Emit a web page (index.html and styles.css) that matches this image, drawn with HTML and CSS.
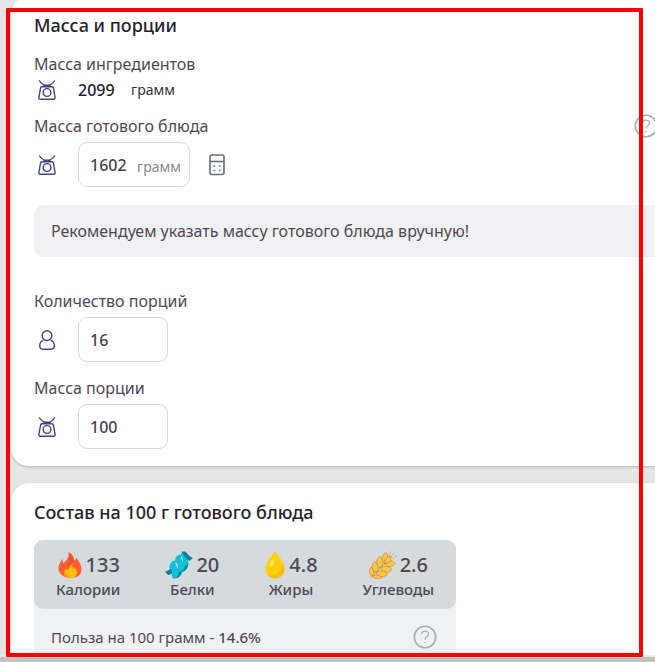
FILE: index.html
```html
<!DOCTYPE html>
<html lang="ru">
<head>
  <meta charset="UTF-8" />
  <meta name="viewport" content="width=device-width, initial-scale=1.0"/>
  <title>Масса и порции</title>
  <link rel="stylesheet" href="styles.css">
</head>
<body>

  <!-- shared icons -->
  <svg class="sprite" aria-hidden="true">
    <symbol id="scale" viewBox="0 0 18 20">
      <path d="M1.200 .5C3 3.500 5.500 5.300 9 5.300s6-1.800 7.800-4.800M4.200 6.700H13.800q1.300 0 1.600 1.300l1.700 9.500q.2 1.800-1.600 1.800H2.500q-1.800 0-1.600-1.800l1.700-9.500q.3-1.300 1.600-1.300zM6 4.800v1.900M12 4.800v1.900"/>
      <circle cx="9" cy="12.500" r="3.900"/>
    </symbol>
    <symbol id="person" viewBox="0 0 18 20">
      <circle cx="9" cy="5.600" r="4.900"/>
      <path d="M5.300 10.400C2.800 11.200 1.700 13 1.700 15.800c0 2.400 1 3.400 3.300 3.400h8c2.300 0 3.300-1 3.300-3.400 0-2.800-1.100-4.600-3.600-5.400"/>
    </symbol>
    <symbol id="help" viewBox="0 0 24 24">
      <circle cx="12" cy="12" r="10.700"/>
      <path d="M8.600 9.300c0-2 1.400-3.200 3.400-3.200s3.500 1.200 3.500 3c0 2.600-3.500 2.700-3.500 5.600M12 17v1.300" stroke-width="1.300"/>
    </symbol>
  </svg>

  <main>
    <section class="card">
      <h2>Масса и порции</h2>

      <div class="label">Масса ингредиентов</div>
      <div class="row total">
        <svg class="icon"><use href="#scale"/></svg>
        <span class="value">2099</span>
        <span>грамм</span>
      </div>

      <div class="label-row">
        <label class="label" for="mass">Масса готового блюда</label>
        <button class="help" type="button" aria-label="Справка"><svg><use href="#help"/></svg></button>
      </div>
      <div class="row">
        <svg class="icon"><use href="#scale"/></svg>
        <div class="field wide">
          <input id="mass" type="text" inputmode="numeric" value="1602">
          <span class="unit">грамм</span>
        </div>
        <button class="calc" type="button" aria-label="Калькулятор">
          <svg viewBox="0 0 16 22">
            <rect x="1" y="1" width="14" height="19.500" rx="2"/>
            <path d="M1 7.500h14"/>
            <path class="keys" d="M4.500 12h1.700M9.800 12h1.700M4.500 16.500h1.700M9.800 16.500h1.700"/>
          </svg>
        </button>
      </div>

      <p class="note">Рекомендуем указать массу готового блюда вручную!</p>

      <label class="label" for="portions">Количество порций</label>
      <div class="row">
        <svg class="icon"><use href="#person"/></svg>
        <div class="field"><input id="portions" type="text" inputmode="numeric" value="16"></div>
      </div>

      <label class="label next" for="portionMass">Масса порции</label>
      <div class="row">
        <svg class="icon"><use href="#scale"/></svg>
        <div class="field"><input id="portionMass" type="text" inputmode="numeric" value="100"></div>
      </div>
    </section>

    <section class="card">
      <h2>Состав на 100 г готового блюда</h2>
      <div class="nutrition">
        <div class="facts">
          <div class="fact">
            <div class="amount">
              <svg viewBox="0 0 26 28">
                <path fill="#ff5b35" d="M11.500 1C15 2.500 17 6 17.200 10c1.300-1 1.700-2.200 1.600-3.500C22 9.500 24.500 14 24.500 18c0 6-4.500 9-11 9S1.500 23 1.500 17.500C1.500 13.500 3.500 11 5 8c.8 1.700 1 3 1.200 4.500C10 9.500 12.500 5.500 11.500 1z"/>
                <path fill="#e63b25" d="M11.500 1C15 2.500 17 6 17.200 10c-1.200 3-3.500 4-6.200 5 2.500-4.500 3-9.500.5-14z" opacity=".35"/>
                <path fill="#ffc107" d="M13.500 13c2 2 2.200 3.500 2 5 1-.3 1.500-1 1.700-2 2.300 2.500 3.300 5 2.300 7.500-1 2.400-3.300 3.500-6 3.500-4 0-6.300-2-6.300-5 0-2 .8-3.300 1.800-4.800.4 1 .7 1.700 1.300 2.300 2-1.800 3.400-3.700 3.200-6.500z"/>
                <path fill="#ffa000" d="M8 18c.3 4 2 7 6 9-4.500 0-6.800-2-6.800-5 0-1.500.3-2.800.8-4z"/>
              </svg>
              <b>133</b>
            </div>
            <div>Калории</div>
          </div>
          <div class="fact">
            <div class="amount">
              <svg viewBox="0 0 28 28" class="wide-icon">
                <!-- dark turns behind the light strands -->
                <g fill="#0b8596">
                  <path d="M0 20.500c3 0 5-2.500 7-5l3 5c-2 2-4 3-7 3.500z"/>
                  <path d="M9 27.500c4.500 0 8-3.500 8.500-8.500l-4-3-3 7z"/>
                  <path d="M15.500 21c4.500 0 7.500-3.500 8-8.500l-4-3-3 7z"/>
                </g>
                <g fill="#13c0dc">
                  <path d="M4.500 17C4.500 12 7 9.500 10.500 9.500c-1 6 5 9 3 14-1 2.500-3 4-5.500 4-2.500-3.500 1-8-3.500-10.500z"/>
                  <path d="M10 10.500C10 5.500 12.500 3.500 16 3.500c-1 6 5 9 3.500 13.500-1 2.500-3 4-5.500 4-2.500-3.500.5-8-4-10.500z"/>
                  <path d="M15.500 4.500C16 2 17 .8 19 .5c3 4 4.500 7 4.500 11-.8 2.500-2 3.500-4.500 3.500-2-3.500.5-7.500-3.500-10.500z"/>
                </g>
                <path fill="#0b8596" d="M16.500.500h4c2 2.500 4 5 7.500 6.500l-3.500 3c-3.500-2-5.500-5.500-8-9.500z"/>
              </svg>
              <b>20</b>
            </div>
            <div>Белки</div>
          </div>
          <div class="fact">
            <div class="amount">
              <svg viewBox="0 0 22 28" class="drop">
                <path fill="#fdd00b" d="M11 .8c4 4.700 9.500 11 9.500 17.200 0 5.400-4 9.200-9.500 9.200S1.500 23.400 1.500 18C1.500 11.800 7 5.500 11 .8z"/>
                <path fill="#f6bd12" d="M18.200 11.500c1.400 2.300 2.300 4.400 2.300 6.500 0 5.400-4 9.200-9.500 9.200-3.500 0-6-1.300-7.700-3.500 8 2.500 14.500-2.200 14.900-12.200z"/>
                <ellipse fill="#ffe45a" cx="8" cy="12" rx="2" ry="4" transform="rotate(25 8 12)"/>
              </svg>
              <b>4.8</b>
            </div>
            <div>Жиры</div>
          </div>
          <div class="fact">
            <div class="amount">
              <svg viewBox="0 0 28 28" class="wide-icon">
                <g fill="#ffc44a" stroke="#c98a1e" stroke-width=".7">
                  <path d="M14.500 11.500C11.500 7.500 13 4 17 1.500c3 4 2.500 8-1 11z"/>
                  <path d="M16.500 13.500c3 3.500 6.500 2.500 9.500-1-3.500-4-6.500-4-10-1z"/>
                  <path d="M9.500 16C6.500 11.500 7.500 8 10.500 5.500c4 3 4.500 7.500 1.500 11z"/>
                  <path d="M12.500 18.500c3 4 8 3.500 10.500 0-3.500-4-7.500-4-11.500-1z"/>
                  <path d="M5 21C2 16.500 3 13 5.500 10.500c4 3 4.500 7 2 10.500z"/>
                  <path d="M8 23c3 4 7.500 3.500 10.500 0-3.500-4-7.500-4-11.500-1z"/>
                  <path d="M2 25C-.5 21 .5 18 2 16c3 2.500 3.500 6 1.500 9z"/>
                  <path d="M4 26c2.500 2.500 6 2.500 8.500.5-2.500-3-5.500-3-9-1z"/>
                  <path d="M16 12.500c-1-4 1-6.500 5.500-7 1 4-1 7-5.500 7z"/>
                </g>
                <path fill="none" stroke="#c98a1e" d="M1.500 27L17 11.500"/>
                <path fill="none" stroke="#dba23c" stroke-dasharray="2 1.500" d="M20.500 5l1-4.500M22 6.500L25.500 1.500M23.500 8L28 4.500"/>
              </svg>
              <b>2.6</b>
            </div>
            <div>Углеводы</div>
          </div>
        </div>
        <div class="benefit">
          <span>Польза на 100 грамм - <b>14.6%</b></span>
          <button class="help" type="button" aria-label="Справка"><svg><use href="#help"/></svg></button>
        </div>
      </div>
    </section>
  </main>

  <div class="bottom-bar"></div>
  <div class="frame"></div>

</body>
</html>
```

FILE: styles.css
```css
* {
  box-sizing: border-box;
}

body {
  margin: 0;
  height: 100vh;
  overflow: hidden;
  position: relative;
  background: #e6e6e6;
  color: #4f4854;
  font-family: 'Noto Sans', 'Open Sans', sans-serif;
  font-size: 16px;
  line-height: 24px;
}

.sprite {
  position: absolute;
  width: 0;
  height: 0;
}

/* the cards run past the right edge of the window */
main {
  margin: -4px -40px 0 11px;
}

.card {
  background: white;
  border-radius: 18px;
  padding: 17px 23px;
  margin-bottom: 17px;
  box-shadow: 0 1px 3px rgba(0,0,0,0.2);
}

.card:last-child {
  padding-bottom: 0;
  margin-bottom: 0;
}

h2 {
  margin: 0 0 15px;
  font-size: 18px;
  font-weight: 500;
  line-height: 24px;
  color: #25222b;
}

.label {
  display: block;
}

.label.next {
  margin-top: 14px;
}

.label-row {
  display: flex;
  justify-content: space-between;
  align-items: center;
  margin-top: 10px;
  padding-right: 14px;
  height: 24px;
}

.row {
  display: flex;
  align-items: center;
  margin-top: 4px;
}

.row.total {
  margin-top: 0;
  height: 28px;
  font-size: 14px;
  color: #35303b;
}

.value {
  width: 53px;
  font-size: 16px;
  font-weight: 500;
  color: #25222b;
}

.icon {
  width: 18px;
  height: 20px;
  margin: 0 22px 0 4px;
  fill: none;
  stroke: #39477f;
  stroke-width: 1.4;
}

.field {
  display: flex;
  align-items: center;
  width: 90px;
  height: 45px;
  padding: 0 8px 0 11px;
  border: 1px solid #d5d9de;
  border-radius: 9px;
}

.field.wide {
  width: 112px;
}

input {
  flex: 1;
  min-width: 0;
  padding: 0;
  border: none;
  outline: none;
  background: none;
  font: inherit;
  font-weight: 500;
  color: #4a434f;
}

.unit {
  padding-top: 4px;
  font-size: 14px;
  color: #8a8793;
}

button {
  padding: 0;
  border: none;
  background: none;
  cursor: pointer;
}

button svg {
  display: block;
  fill: none;
}

.help svg {
  width: 24px;
  height: 24px;
  stroke: #a8adb5;
  stroke-width: 1.6;
}

.calc {
  margin-left: 19px;
}

.calc svg {
  width: 16px;
  height: 22px;
  stroke: #66707a;
  stroke-width: 1.6;
}

.note {
  margin: 18px 0 32px;
  padding: 14px 17px;
  border-radius: 9px;
  background: #f1f1f3;
}

.nutrition {
  max-width: 422px;
  margin-top: 16px;
  border-radius: 9px;
  background: #f0f1f3;
}

.facts {
  display: flex;
  justify-content: space-between;
  padding: 11px 22px 10px;
  border-radius: 9px;
  background: #d5dadc;
  font-size: 15px;
  font-weight: 500;
  line-height: 20px;
}

.fact {
  display: flex;
  flex-direction: column;
  align-items: center;
}

.amount {
  display: flex;
  align-items: center;
  gap: 3px;
  height: 28px;
  font-size: 20px;
}

.amount svg {
  width: 26px;
  height: 28px;
}

.amount .wide-icon {
  width: 28px;
}

.amount .drop {
  width: 22px;
}

b {
  font-weight: 500;
}

.benefit {
  display: flex;
  justify-content: space-between;
  align-items: center;
  height: 56px;
  padding: 0 19px 0 17px;
  font-size: 15px;
}

.bottom-bar {
  position: absolute;
  left: 0;
  right: 0;
  bottom: 0;
  height: 7px;
  background: #c0c2bf;
  border-top: 2px solid #eceeec;
}

/* red selection over the page */
.frame {
  position: absolute;
  top: 8px;
  left: 6px;
  right: 12px;
  bottom: 5px;
  border: 4px solid #ff0000;
  border-radius: 1px;
}
```
